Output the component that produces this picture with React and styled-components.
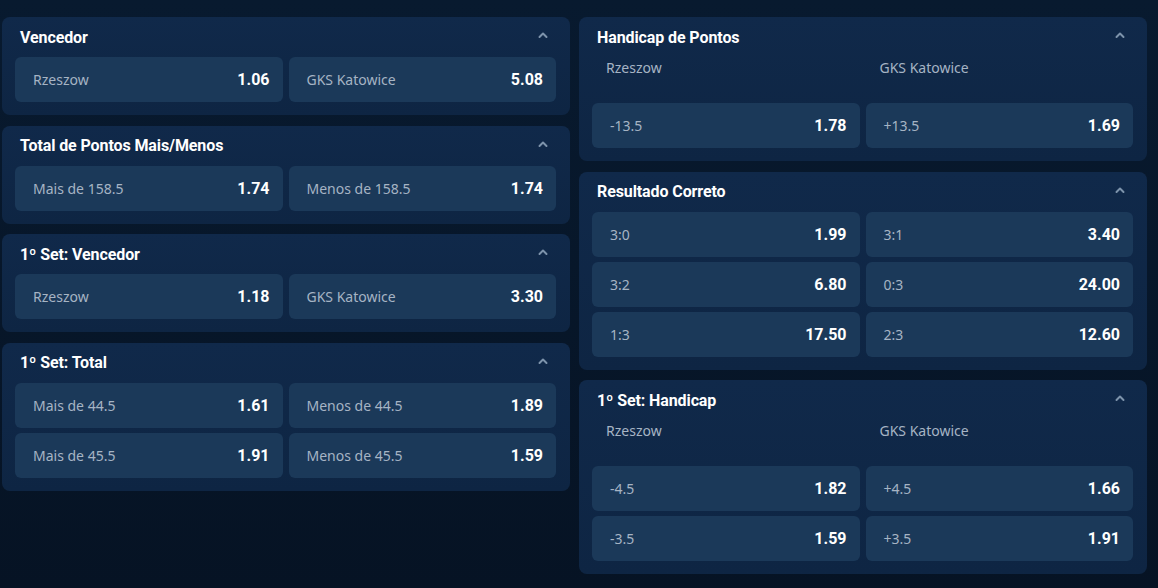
import styled, { createGlobalStyle } from 'styled-components';

const GlobalStyle = createGlobalStyle`
    html, body {
        margin: 0;
        padding: 0;
        background: #071526;
    }
    body {
        font-family: Roboto, 'Liberation Sans', sans-serif;
        -webkit-font-smoothing: antialiased;
    }
`;

const Page = styled.div`
    display: grid;
    grid-template-columns: 568px 568px;
    column-gap: 9px;
    padding: 17px 0 0 2px;
    min-height: 571px;
    background: linear-gradient(180deg, #081a2f 0%, #061324 100%);
`;

const Column = styled.div`
    display: flex;
    flex-direction: column;
    gap: 10.5px;
    align-items: stretch;
`;

const Panel = styled.section`
    background: linear-gradient(180deg, #10294a 0%, #0e2543 100%);
    border-radius: 8px;
    padding: 0 14px 13px 13px;
`;

const Header = styled.div`
    display: flex;
    align-items: center;
    justify-content: space-between;
    height: 40px;
    padding: 0 8px 0 5px;
`;

const Title = styled.h3`
    margin: 0;
    font-family: Roboto, sans-serif;
    font-weight: 700;
    font-size: 16px;
    color: #ffffff;
    letter-spacing: -0.1px;
`;

const Chevron = styled.svg`
    width: 10px;
    height: 8px;
    margin-top: -4px;
`;

const Teams = styled.div`
    display: grid;
    grid-template-columns: 1fr 1fr;
    column-gap: 6px;
    height: 46px;
    align-items: start;
    div {
        padding: 1px 0 0 14px;
        font-family: 'Noto Sans', sans-serif;
        font-size: 14px;
        color: #a6b4c4;
        line-height: 20px;
    }
`;

const Grid = styled.div`
    display: grid;
    grid-template-columns: 1fr 1fr;
    gap: 5px 6px;
`;

const Odd = styled.button`
    display: flex;
    align-items: center;
    justify-content: space-between;
    height: 45px;
    padding: 0 13px 0 18px;
    border: 0;
    border-radius: 6px;
    background: #1b3959;
    cursor: pointer;
    .label {
        font-family: 'Noto Sans', sans-serif;
        font-size: 14px;
        color: #a6b4c4;
    }
    .price {
        font-family: Roboto, sans-serif;
        font-weight: 700;
        font-size: 16px;
        color: #ffffff;
    }
`;

const left = [
    { title: 'Vencedor', odds: [['Rzeszow', '1.06'], ['GKS Katowice', '5.08']] },
    { title: 'Total de Pontos Mais/Menos', odds: [['Mais de 158.5', '1.74'], ['Menos de 158.5', '1.74']] },
    { title: '1º Set: Vencedor', odds: [['Rzeszow', '1.18'], ['GKS Katowice', '3.30']] },
    {
        title: '1º Set: Total',
        odds: [['Mais de 44.5', '1.61'], ['Menos de 44.5', '1.89'], ['Mais de 45.5', '1.91'], ['Menos de 45.5', '1.59']],
    },
];

const right = [
    { title: 'Handicap de Pontos', teams: true, odds: [['-13.5', '1.78'], ['+13.5', '1.69']] },
    {
        title: 'Resultado Correto',
        odds: [['3:0', '1.99'], ['3:1', '3.40'], ['3:2', '6.80'], ['0:3', '24.00'], ['1:3', '17.50'], ['2:3', '12.60']],
    },
    { title: '1º Set: Handicap', teams: true, odds: [['-4.5', '1.82'], ['+4.5', '1.66'], ['-3.5', '1.59'], ['+3.5', '1.91']] },
];

function Market({ title, teams, odds }) {
    return (
        <Panel>
            <Header>
                <Title>{title}</Title>
                <Chevron viewBox="0 0 10 8">
                    <path d="M1.5 6 L5 2.5 L8.5 6" fill="none" stroke="#7d93ab" strokeWidth="2" strokeLinecap="round" strokeLinejoin="round" />
                </Chevron>
            </Header>
            {teams && (
                <Teams>
                    <div>Rzeszow</div>
                    <div>GKS Katowice</div>
                </Teams>
            )}
            <Grid>
                {odds.map(([label, price]) => (
                    <Odd key={label}>
                        <span className="label">{label}</span>
                        <span className="price">{price}</span>
                    </Odd>
                ))}
            </Grid>
        </Panel>
    );
}

export default function App() {
    return (
        <>
            <GlobalStyle />
            <Page>
                <Column>
                    {left.map((m) => (
                        <Market key={m.title} {...m} />
                    ))}
                </Column>
                <Column>
                    {right.map((m) => (
                        <Market key={m.title} {...m} />
                    ))}
                </Column>
            </Page>
        </>
    );
}
